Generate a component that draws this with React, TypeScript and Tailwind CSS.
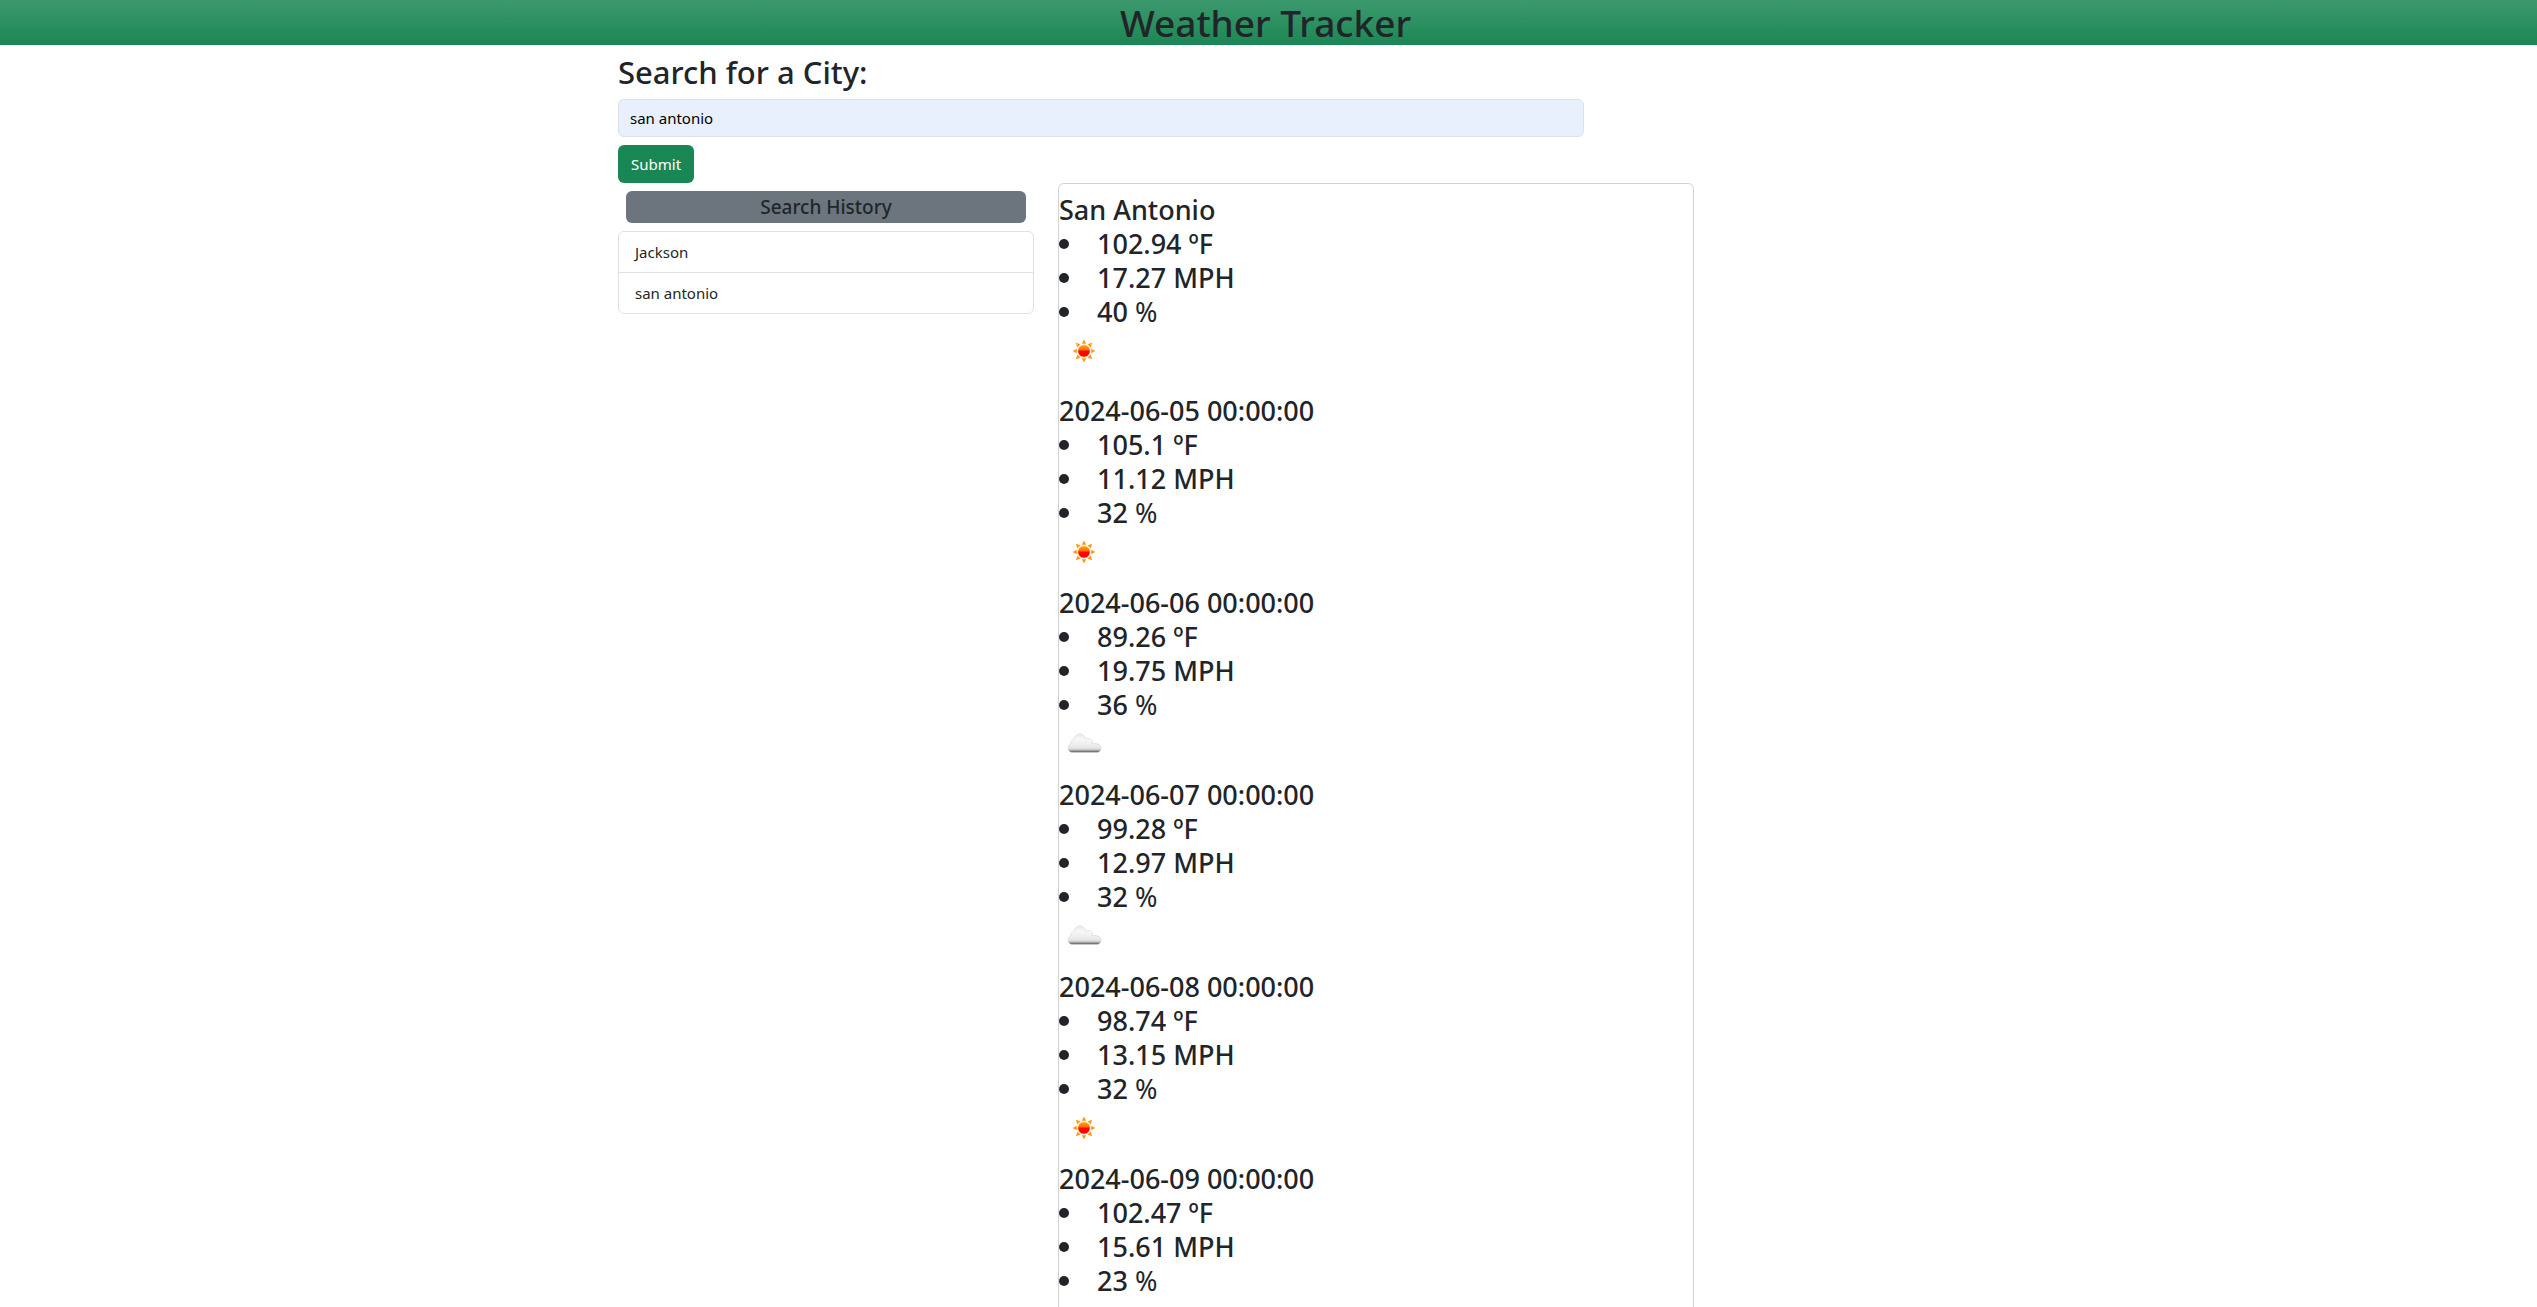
import React from "react";

type Sky = "sun" | "cloud";

interface Day {
  title: string;
  temp: string;
  wind: string;
  humidity: string;
  sky: Sky;
}

const days: Day[] = [
  { title: "San Antonio", temp: "102.94", wind: "17.27", humidity: "40", sky: "sun" },
  { title: "2024-06-05 00:00:00", temp: "105.1", wind: "11.12", humidity: "32", sky: "sun" },
  { title: "2024-06-06 00:00:00", temp: "89.26", wind: "19.75", humidity: "36", sky: "cloud" },
  { title: "2024-06-07 00:00:00", temp: "99.28", wind: "12.97", humidity: "32", sky: "cloud" },
  { title: "2024-06-08 00:00:00", temp: "98.74", wind: "13.15", humidity: "32", sky: "sun" },
  { title: "2024-06-09 00:00:00", temp: "102.47", wind: "15.61", humidity: "23", sky: "sun" },
];

const searches = ["Jackson", "san antonio"];
const rayAngles = [0, 45, 90, 135, 180, 225, 270, 315];

function SunIcon() {
  return (
    <svg viewBox="0 0 36 24" className="h-6 w-9" role="img" aria-label="Clear">
      <defs>
        <linearGradient id="sun-core" x1="0" y1="0" x2="0" y2="1">
          <stop offset="0" stopColor="#ffa52a" />
          <stop offset="0.42" stopColor="#ff6a00" />
          <stop offset="0.5" stopColor="#ff0800" />
          <stop offset="1" stopColor="#ff0000" />
        </linearGradient>
      </defs>
      {rayAngles.map((a) => (
        <path key={a} d="M18 0.500 L20.300 4.800 L15.700 4.800 Z" fill="#ff9c14" transform={`rotate(${a} 18 12)`} />
      ))}
      <circle cx="18" cy="12" r="6.100" fill="url(#sun-core)" stroke="#ffc061" strokeWidth="0.6" />
    </svg>
  );
}

function CloudIcon() {
  return (
    <svg viewBox="0 0 36 24" className="h-6 w-9" role="img" aria-label="Clouds">
      <defs>
        <linearGradient id="cloud-fill" x1="0" y1="0" x2="0" y2="1">
          <stop offset="0" stopColor="#ececec" />
          <stop offset="0.3" stopColor="#f7f7f7" />
          <stop offset="0.75" stopColor="#e6e6e6" />
          <stop offset="0.87" stopColor="#c4c4c4" />
          <stop offset="0.92" stopColor="#757575" />
          <stop offset="1" stopColor="#808080" />
        </linearGradient>
      </defs>
      <path
        d="M6 20.500 C3.500 20 2 18.300 2 16 C2 14 3.200 12.500 4.800 12 C4.500 9 6.200 7 8.300 7.300 C8.800 4 11 2 14 2 C17 2 19 4 19.500 7.300 C22.500 5 26.500 6.500 26.800 11.800 C30 11 35 12 35 16 C35 18.500 33.500 20.200 31.500 20.500 Z"
        fill="url(#cloud-fill)"
        stroke="#cfcfcf"
        strokeWidth="0.5"
      />
    </svg>
  );
}

function Reading({ value, unit, light }: { value: string; unit: string; light?: boolean }) {
  return (
    <li className="flex items-center">
      <span className="size-2.5 rounded-full bg-[#212529]" />
      <span className="pl-7">
        {value} <span className={light ? "font-normal" : "font-medium"}>{unit}</span>
      </span>
    </li>
  );
}

function Forecast({ day }: { day: Day }) {
  return (
    <section className="text-[27px] leading-[34px] font-medium first:mb-[9px]">
      <h3>{day.title}</h3>
      <ul>
        <Reading value={day.temp} unit="ºF" />
        <Reading value={day.wind} unit="MPH" />
        <Reading value={day.humidity} unit="%" light />
      </ul>
      <div className="flex h-14 items-start pt-2.5 pl-[7px]">
        {day.sky === "sun" ? <SunIcon /> : <CloudIcon />}
      </div>
    </section>
  );
}

export default function App() {
  return (
    <div className="bg-white font-['Noto_Sans',sans-serif] text-[15px] leading-6 text-[#212529]">
      <header className="bg-linear-to-b from-[#3c996e] to-[#198754] pr-1.5">
        <h1 className="text-center text-[37px] leading-[45px] font-medium">Weather Tracker</h1>
      </header>
      <main className="mx-auto max-w-[1325px] pr-[5px]">
        <form className="w-3/4 px-3 pt-2" onSubmit={(e) => e.preventDefault()}>
          <label htmlFor="city" className="block pb-2 text-[31px] leading-[38px] font-medium">
            Search for a City:
          </label>
          <input
            id="city"
            type="text"
            defaultValue="san antonio"
            className="block h-[38px] w-full rounded-md border border-[#dee2e6] bg-[#e8f0fe] px-[11px] text-black"
          />
          <button type="submit" className="mt-2 block h-[38px] rounded-md bg-[#198754] px-[13px] text-white">
            Submit
          </button>
        </form>
        <div className="flex">
          <aside className="w-1/3 px-3">
            <h5 className="m-2 rounded-md bg-[#6c757d] text-center text-[19px] leading-8 font-medium">
              Search History
            </h5>
            <ul className="divide-y divide-[#dee2e6] rounded-md border border-[#dee2e6]">
              {searches.map((name) => (
                <li key={name} className="px-4 py-2">
                  {name}
                </li>
              ))}
            </ul>
          </aside>
          <div className="w-1/2 px-3">
            <div className="rounded-md border border-[#d3d3d4] pt-[9px]">
              {days.map((day) => (
                <Forecast key={day.title} day={day} />
              ))}
            </div>
          </div>
        </div>
      </main>
    </div>
  );
}
